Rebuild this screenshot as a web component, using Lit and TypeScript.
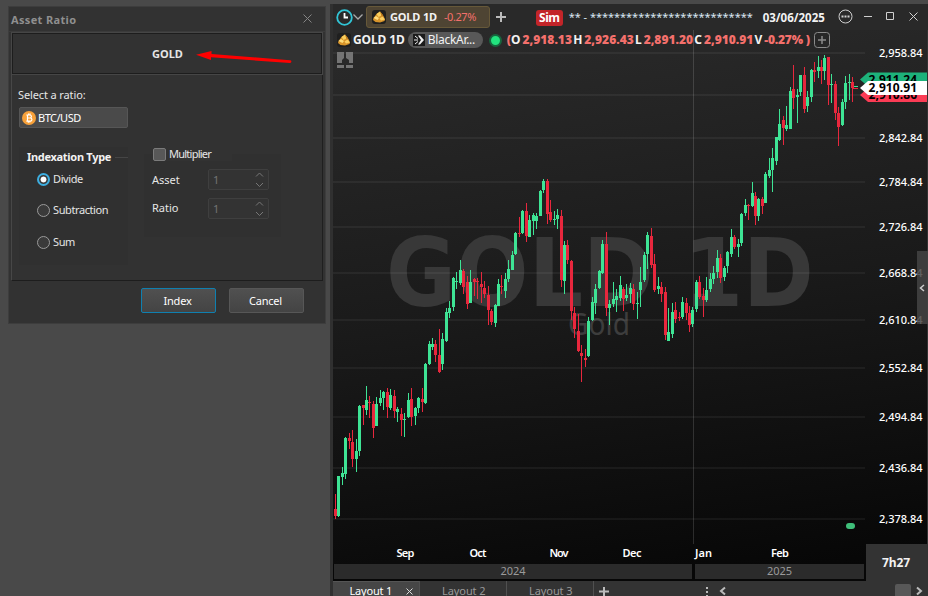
import { LitElement, html, svg, css } from "lit";
import { customElement, property } from "lit/decorators.js";
import { classMap } from "lit/directives/class-map.js";

type Candle = [x: number, high: number, top: number, bottom: number, low: number, up: 0 | 1];

const CANDLES: Candle[] = [
  [335,494,509,516,519,0],[338,476,476,516,517,1],[342,467,473,477,485,1],[345,437,438,474,479,1],
  [349,433,438,441,449,0],[352,430,442,459,467,0],[356,439,451,459,472,1],[359,405,406,451,456,1],
  [363,405,405,408,425,0],[366,386,400,410,415,1],[369,396,402,403,418,0],[373,401,404,428,438,0],
  [376,397,404,426,426,1],[380,390,398,403,406,1],[383,391,392,398,410,1],[387,388,392,407,418,0],
  [390,389,395,408,410,1],[394,390,396,411,418,0],[397,407,409,412,422,1],[401,408,414,420,436,0],
  [404,413,419,420,437,1],[408,393,400,417,418,1],[411,388,399,417,426,0],[415,407,408,416,425,1],
  [418,397,398,408,413,1],[422,388,399,402,412,0],[425,363,364,403,404,1],[429,341,344,364,365,1],
  [432,338,344,347,350,1],[435,340,344,355,362,0],[439,329,355,372,373,0],[442,333,339,364,370,1],
  [446,308,312,341,342,1],[449,301,308,313,318,1],[453,277,278,307,311,1],[456,272,281,282,289,1],
  [460,260,270,283,285,1],[463,269,271,287,294,0],[467,276,282,304,309,0],[470,270,282,303,303,1],
  [474,278,279,282,296,0],[477,278,281,282,299,0],[481,272,284,287,303,0],[484,281,288,294,298,0],
  [488,286,295,310,325,0],[491,309,311,322,325,0],[495,304,305,323,327,1],[498,279,284,306,306,1],
  [501,275,286,287,294,0],[505,273,279,291,298,1],[508,260,269,279,282,1],[512,251,255,270,270,1],
  [515,232,233,254,255,1],[519,217,233,234,237,0],[522,210,211,233,234,1],[526,203,211,236,242,0],
  [529,215,220,237,237,1],[533,213,215,221,235,1],[536,213,216,221,229,1],[540,190,191,216,216,1],
  [543,179,181,190,193,1],[547,179,181,214,224,0],[550,200,212,220,222,0],[554,211,219,220,225,1],
  [557,209,215,219,229,1],[561,210,216,280,287,0],[564,241,245,281,294,1],[567,240,245,260,264,0],
  [571,260,261,311,320,0],[574,307,313,329,338,0],[578,314,331,351,352,0],[581,345,353,356,382,0],
  [585,349,358,360,367,0],[588,317,321,356,357,1],[592,297,302,320,321,1],[595,284,289,303,314,1],
  [599,270,271,288,289,1],[602,240,244,273,274,1],[606,232,244,308,316,0],[609,300,304,308,325,1],
  [613,282,299,304,307,1],[616,289,296,300,312,1],[620,276,285,298,301,1],[623,287,289,299,311,0],
  [626,284,295,298,301,1],[630,283,288,294,303,1],[633,284,289,304,310,0],[637,292,303,304,319,1],
  [640,267,282,290,307,1],[644,252,255,280,282,1],[647,232,235,254,269,1],[651,228,236,265,268,0],
  [654,254,264,290,292,0],[658,277,286,289,294,1],[661,282,287,294,302,0],[665,287,292,335,340,0],
  [668,308,332,341,341,1],[672,303,312,334,338,1],[675,302,310,319,323,0],[679,312,317,318,321,0],
  [682,297,302,317,319,1],[686,298,303,313,320,0],[689,306,313,325,332,0],[692,307,310,324,327,1],
  [696,280,282,309,312,1],[699,276,282,297,299,0],[703,288,296,300,317,0],[706,277,290,300,302,1],
  [710,273,279,289,292,1],[713,266,273,279,284,1],[717,250,258,272,278,1],[720,254,258,278,283,0],
  [724,266,268,277,281,1],[727,251,252,266,273,1],[731,229,237,254,257,1],[734,235,237,247,249,0],
  [738,239,244,247,257,1],[741,213,214,243,246,1],[745,199,205,213,216,1],[748,204,205,206,220,0],
  [752,182,193,206,207,1],[755,192,196,216,225,0],[758,198,199,216,221,1],[762,197,199,206,214,0],
  [765,172,174,203,203,1],[769,158,170,176,178,1],[772,148,158,170,192,1],[776,137,137,161,165,1],
  [779,109,124,140,141,1],[783,116,120,128,145,0],[786,106,125,129,131,1],[790,87,91,129,129,1],
  [793,65,89,98,109,0],[797,89,95,97,123,1],[800,75,75,92,96,1],[804,67,75,109,113,0],
  [807,91,97,106,112,1],[811,69,70,97,102,1],[814,62,70,72,82,0],[818,56,67,71,78,1],
  [821,60,67,71,84,0],[824,55,58,71,80,1],[828,57,57,85,105,0],[831,74,84,85,103,1],
  [835,81,84,113,120,0],[838,107,113,127,146,0],[842,99,102,125,126,1],[845,76,83,102,109,1],
  [849,74,82,83,100,1],[852,77,82,88,102,0],
];

const PRICES: [string, number][] = [
  ["2,958.84", 53], ["", 95], ["2,842.84", 138], ["2,784.84", 182], ["2,726.84", 227],
  ["2,668.84", 273], ["2,610.84", 320], ["2,552.84", 368], ["2,494.84", 417],
  ["2,436.84", 468], ["2,378.84", 519],
];

const MONTHS: [string, number, number][] = [
  ["Sep", 405.5, 18], ["Oct", 478, 17], ["Nov", 559, 19], ["Dec", 632, 19], ["Jan", 703.5, 17], ["Feb", 780, 18],
];

const goldIcon = html`<svg width="14" height="14" viewBox="0 0 14 14">
  <rect width="14" height="14" rx="3" fill="#1f1f1f"/>
  <path d="M4.500 4 8 1.500 11.500 6 13 9.500 12.500 11 8 12.500 3.500 12 1 10 1.500 8z" fill="#d8942a"/>
  <path d="M4.500 4 8 1.500 9.500 5.500 6.500 7z" fill="#f8cd5c"/>
  <path d="M8 1.500 11 5 10.500 7 9.500 5.500z" fill="#b9771c"/>
  <path d="M1.500 8 4 6 7 8 5.500 10z" fill="#ffdc7a"/>
  <path d="M7.500 8.500 10.500 6.500 13 9.500 9 10.500z" fill="#fbcf62"/>
</svg>`;

@customElement("ratio-dialog")
class RatioDialog extends LitElement {
  static styles = css`
    :host { display: flex; flex-direction: column; box-sizing: border-box; width: 318px; height: 318px;
      background: #323232; border: 1px solid #3d3d3d; color: #e6e6e6; font: 11px/14px "Noto Sans", "Open Sans", sans-serif; }
    .title { display: flex; align-items: center; justify-content: space-between; height: 25px; padding: 0 13px 0 2px;
      color: #8f8f8f; font-weight: 700; box-sizing: border-box; border-bottom: 1px solid #3b3b3b; padding-top: 2px; letter-spacing: .35px; }
    .title svg { margin-top: -3px; }
    .panel { margin: 0 2px; height: 249px; box-sizing: border-box; border-left: 1px solid #474747; border-right: 1px solid #1f1f1f;
      border-bottom: 1px solid #1d1d1d; }
    .asset { display: flex; align-items: center; height: 41px; box-sizing: border-box; border: 1px solid #1d1d1d;
      outline: 1px solid #464646; outline-offset: 0; margin-top: 1px; padding-left: 139px; font-weight: 700; gap: 14px; }
    .asset svg { margin: 7px 0 0 -1px; }
    .label { margin: 14px 0 0 6px; letter-spacing: -.12px; }
    .combo { display: flex; align-items: center; gap: 2px; box-sizing: border-box; width: 109px; height: 21px; margin: 5px 0 0 7px;
      padding-left: 2px; background: #4a4a4a; border: 1px solid #565656; border-radius: 2px; color: #fff; letter-spacing: -.5px; }
    .groups { display: flex; align-items: flex-start; margin: 19px 0 0 7px; gap: 16px; }
    .types { width: 109px; height: 118px; background: #303030; box-sizing: border-box; padding: 3px 0 0 8px; }
    .legend { display: flex; align-items: center; gap: 4px; font-weight: 700; color: #f2f2f2; letter-spacing: -.3px; white-space: nowrap; }
    .legend i { flex: 1; height: 1px; background: #454545; }
    .radio { display: flex; align-items: center; gap: 3px; margin-left: 10px; height: 14px; letter-spacing: -.4px; }
    .radio + .radio { margin-top: 17px; }
    .radio + .radio + .radio { margin-top: 18px; }
    .legend + .radio { margin-top: 8px; }
    .dot { width: 13px; height: 13px; box-sizing: border-box; border: 1px solid #9a9a9a; border-radius: 50%; background: #3a3a3a; }
    .dot.on { border: 2px solid #3daee0; background: radial-gradient(circle, #fff 0 2.6px, #3a3a3a 3.3px); }
    .mult { width: 137px; height: 83px; margin-top: 7px; background: #303030; }
    .check { display: flex; align-items: center; gap: 3px; height: 14px; margin: -7px 0 0 9px; width: 79px; background: #323232; letter-spacing: -.75px; }
    .box { width: 13px; height: 13px; box-sizing: border-box; border: 1px solid #7b7b7b; border-radius: 2px; background: #585858; }
    .row { display: flex; align-items: center; height: 21px; margin: 8px 0 0 8px; }
    .row + .row { margin-top: 8px; }
    .row span { width: 56px; }
    .row + .row span { margin-top: -2px; }
    .spin { display: flex; align-items: center; justify-content: space-between; box-sizing: border-box; width: 61px; height: 21px;
      padding: 0 4px; border: 1px solid #3f3f3f; border-radius: 2px; color: #737373; background: #333; }
    .actions { display: flex; gap: 13px; margin: 7px 0 0 132px; }
    .btn { display: grid; place-items: center; box-sizing: border-box; width: 75px; height: 25px; border: 1px solid #575757; border-radius: 2px; padding-right: 2px;
      background: linear-gradient(#505050, #444); color: #fff; letter-spacing: -.2px; }
    .btn.primary { border-color: #0f80b0; }
  `;
  private spin(label: string) {
    return html`<div class="row"><span>${label}</span><div class="spin">1
      <svg width="9" height="17" viewBox="0 0 9 17" fill="none" stroke="#777"><path d="M1 5.500 4.500 2 8 5.500M1 12 4.500 15.500 8 12"/></svg></div></div>`;
  }
  render() {
    return html`
      <div class="title">Asset Ratio
        <svg width="9" height="9" viewBox="0 0 9 9" stroke="#858585"><path d="M.5.5l8 8M8.500.5l-8 8"/></svg></div>
      <div class="panel">
        <div class="asset">GOLD
          <svg width="96" height="12" viewBox="0 0 96 12"><path d="M0 3.800 15.500 0v3L94 9.200a1.400 1.400 0 0 1 0 2.800L15 6.300V9z" fill="#f00"/></svg></div>
        <div class="label">Select a ratio:</div>
        <div class="combo">
          <svg width="14" height="14" viewBox="0 0 14 14"><circle cx="7" cy="7" r="7" fill="#f7a13a"/>
            <path d="M5.500 3.500v7M4.300 4h3.600a1.400 1.400 0 0 1 0 3H5.500h2.800a1.600 1.600 0 0 1 0 3.200H4.300M6.600 2.500v1.500M8.100 2.600V4M6.300 10v1.700M7.800 10v1.600" fill="none" stroke="#fff" stroke-width="1.200"/></svg>
          BTC/USD</div>
        <div class="groups">
          <div class="types">
            <div class="legend">Indexation Type<i></i></div>
            ${["Divide", "Subtraction", "Sum"].map((t, i) => html`<div class="radio"><div class=${classMap({ dot: true, on: i === 0 })}></div>${t}</div>`)}
          </div>
          <div class="mult">
            <div class="check"><div class="box"></div>Multiplier</div>
            ${this.spin("Asset")}${this.spin("Ratio")}
          </div>
        </div>
      </div>
      <div class="actions"><div class="btn primary">Index</div><div class="btn">Cancel</div></div>`;
  }
}

@customElement("price-plot")
class PricePlot extends LitElement {
  @property({ attribute: false }) candles: Candle[] = [];
  static styles = css`
    :host { display: block; }
    svg { display: block; }
    text { font-family: "Noto Sans", "Open Sans", sans-serif; font-size: 11px; fill: #fff; }
    .mark { font-family: "DejaVu Sans", sans-serif; fill: #383838; font-weight: 700; font-size: 95px; }
    .submark { font-family: "Noto Sans", sans-serif; fill: #3d3d3d; font-size: 30px; }
    .tag { font-size: 12px; font-weight: 700; fill: #000; }
    .month { font-weight: 600; }
    .price { font-weight: 500; }
    .grid { fill: #fff; fill-opacity: .05; }
    .up { fill: #3ee495; }
    .down { fill: #e8273d; }
  `;
  private tag(price: string, y: number, fill: string) {
    return svg`<path d="M860 ${y} 868 ${y - 7}H927V${y + 7}H868Z" fill=${fill}/><text class="tag" x="868.500" y=${y + 4.2} textLength="48.500">${price}</text>`;
  }
  render() {
    return html`<svg width="595" height="534" viewBox="333 30 595 534" shape-rendering="crispEdges">
      <text class="mark" x="386" y="306" textLength="428" lengthAdjust="spacingAndGlyphs">GOLD 1D</text>
      <text class="submark" x="568" y="334.500" textLength="62" lengthAdjust="spacingAndGlyphs">Gold</text>
      ${PRICES.map(([, y]) => svg`<rect class="grid" x="333" y=${y - 1} width="532" height="2"/>`)}
      <rect x="693" y="30" width="1" height="514" fill="#fff" fill-opacity=".14"/>
      ${this.candles.map(([x, h, t, b, l, up]) => svg`<g class=${up ? "up" : "down"}>
        <rect x=${x} y=${h} width="1" height=${l - h}/><rect x=${x - 1} y=${t} width="3" height=${Math.max(1, b - t)}/></g>`)}
      <rect class="up" x="854" y="86" width="4" height="1"/><rect class="down" x="853" y="88" width="5" height="1"/>
      ${PRICES.map(([p, y]) => p ? svg`<text class="price" x="879" y=${y + 4} textLength="43.500">${p}</text>` : null)}
      <g shape-rendering="auto">
        ${this.tag("2,911.24", 79.5, "#1db27b")}
        ${this.tag("2,910.86", 95, "#fb3c55")}
        ${this.tag("2,910.91", 88, "#fff")}
        <rect x="846" y="523" width="9" height="6" rx="3" fill="#3fbf7a"/>
        <g fill="#747474"><path d="M337 52h7v6l-2 2v3h-5zM346 52h7v11h-4v-3l-3-2z"/><path d="M337 65h7v3h-7zM346 65h7v3h-7z"/></g>
        <path d="M927.500 30V544" stroke="#333"/>
      </g>
      ${MONTHS.map(([m, x, w]) => svg`<text class="month" x=${x - w / 2} y="557" textLength=${w}>${m}</text>`)}
      <rect x="866" y="544" width="62" height="20" fill="#333"/>
    </svg>`;
  }
}

@customElement("chart-window")
class ChartWindow extends LitElement {
  static styles = css`
    :host { display: flex; flex-direction: column; width: 595px; height: 592px; background: #272727; border-left: 3px solid #303030; box-sizing: content-box;
      font: 11px/14px "Noto Sans", "Open Sans", sans-serif; color: #f2f2f2; white-space: nowrap; }
    svg { display: block; flex: none; }
    .top { display: flex; align-items: center; height: 26px; padding-left: 3px; background: #292929; }
    .tab { display: flex; align-items: center; gap: 4px; box-sizing: border-box; width: 125px; height: 22px; margin-left: 3px; padding-left: 5px;
      border: 1px solid #665839; border-radius: 3px; background: #4e4433; font-weight: 700; }
    .tab span { letter-spacing: -.15px; }
    .tab em { font-style: normal; font-weight: 400; color: #f4706c; margin-left: 3px; letter-spacing: -.45px; }
    .sim { margin: 1px 0 0 24px; width: 27px; height: 16px; text-align: center; border-radius: 3px; background: #c32529; font: 700 12px/16px "Noto Sans", sans-serif; color: #fff; letter-spacing: -.4px; }
    .account { margin-left: 6px; width: 184px; color: #d9e6f2; letter-spacing: -.03px; }
    .date { margin: 1px 0 0 10px; width: 70px; font-weight: 700; font-size: 11.500px; }
    .body { display: grid; height: 534px; background: linear-gradient(172deg, #2b2b2b, #1a1a1a 50%, #060606); }
    .body > * { grid-area: 1 / 1; }
    .info { display: flex; align-items: center; height: 20px; padding-left: 4px; font-weight: 700; font-size: 12px; align-self: start; z-index: 1; }
    .info b { color: #f4706c; margin-left: 2px; }
    .info b.open { margin-left: 0; }
    .info b.change { letter-spacing: -.2px; }
    .name { margin-left: 2px; letter-spacing: -.1px; }
    .pill { display: flex; align-items: center; gap: 3px; box-sizing: border-box; width: 75px; height: 16px; padding-left: 5px; margin-left: 3px; border-radius: 8px;
      background: #585858; font-weight: 400; letter-spacing: -.3px; }
    .live { box-sizing: border-box; width: 13px; height: 13px; margin: 0 5px 0 6px; border: 2px solid #17663f; border-radius: 50%; background: #22e37e; }
    .handle { justify-self: end; align-self: start; display: grid; place-items: center; width: 11px; height: 73px; margin-top: 221px; background: rgba(68, 68, 68, .85); z-index: 1; }
    .foot { display: flex; height: 17px; background: #070707; }
    .year { height: 15px; background: #2b2b2b; color: #9a9a9a; text-align: center; line-height: 14px; }
    .y24 { width: 358px; margin-left: 1px; } .y25 { width: 169px; margin-left: 3px; }
    .clock { margin: -8px 0 0 auto; width: 62px; height: 25px; line-height: 14px; background: #333; text-align: center; font-weight: 700; font-size: 12px; text-indent: -2px; letter-spacing: -.1px; }
    .tabs { display: flex; height: 15px; background: #333; color: #999; overflow: hidden; line-height: 20px; }
    .layout { display: flex; align-items: flex-start; width: 87px; box-sizing: border-box; padding-left: 22px; border-right: 1px solid #505050; height: 18px; letter-spacing: -.08px; }
    .layout.on { padding-left: 16.500px; background: #464646; color: #fff; line-height: 18px; border-top: 1px solid #555; letter-spacing: -.2px; }
    .layout svg { margin: 6px 0 0 14px; }
  `;
  render() {
    return html`
      <div class="top">
        <svg width="17" height="17" viewBox="0 0 17 17" fill="none"><circle cx="8.500" cy="8.500" r="7.300" stroke="#31c5d6" stroke-width="1.800"/><path d="M8.500 4v4.500H12" stroke="#fff" stroke-width="1.800"/></svg>
        <svg width="10" height="6" viewBox="0 0 10 6" fill="none" stroke="#aaa" stroke-width="1.300"><path d="M.5.5l4.500 4.500 4.500-4.500"/></svg>
        <div class="tab">${goldIcon}<span>GOLD 1D</span><em>-0.27%</em></div>
        <svg width="22" height="10" viewBox="0 0 22 10"><path d="M6 5h10M11 0v10" stroke="#bbb" stroke-width="2"/></svg>
        <div class="sim">Sim</div>
        <div class="account">** - ***************************</div>
        <div class="date">03/06/2025</div>
        <svg width="96" height="16" viewBox="833 9 96 16" fill="none" stroke="#cfcfcf">
          <circle cx="846.500" cy="16.500" r="6.500"/><path d="M842.500 16.500h8" stroke-width="2" stroke-dasharray="2 1"/>
          <path d="M865 16.500h8M887.500 12.500h7v7h-7zM910.500 12.500l8 8M918.500 12.500l-8 8"/></svg>
      </div>
      <div class="body">
        <price-plot .candles=${CANDLES}></price-plot>
        <div class="info">${goldIcon}<span class="name">GOLD 1D</span>
          <div class="pill"><svg width="12" height="12" viewBox="0 0 12 12"><rect width="12" height="12" fill="#1b1b1b"/><path d="M2 2l3 2.500M1 6h4M2 10l3-2.500" fill="none" stroke="#eee"/><path d="M5 1.500h2L11 6 7 10.500H5L8 6z" fill="#eee"/></svg>BlackAr...</div>
          <div class="live"></div>
          <b class="open">(</b>O<b>2,918.13</b>&#8202;H<b>2,926.43</b>&#8202;L<b>2,891.20</b>&#8202;C<b>2,910.91</b>&#8202;V<b class="change">-0.27% )</b>
          <svg width="20" height="16" viewBox="0 0 20 16" fill="none" stroke="#8a8a8a"><rect x="4.500" y=".5" width="15" height="15" rx="3"/><path d="M8 8h8M12 4v8" stroke-width="1.500"/></svg>
        </div>
        <div class="handle"><svg width="8" height="8" viewBox="0 0 8 8" fill="none" stroke="#ccc" stroke-width="1.500"><path d="M5 1 1.500 4 5 7"/></svg></div>
      </div>
      <div class="foot"><div class="year y24">2024</div><div class="year y25">2025</div><div class="clock">7h27</div></div>
      <div class="tabs">
        <div class="layout on">Layout 1<svg width="7" height="7" viewBox="0 0 7 7" stroke="#ddd"><path d="M.5.5l6 6M6.500.5l-6 6"/></svg></div>
        <div class="layout">Layout 2</div><div class="layout">Layout 3</div>
        <svg width="334" height="15" viewBox="594 581 334 15" fill="none" stroke="#bbb" stroke-width="2">
          <path d="M599 591.500h10M604 587v9"/><path d="M707 587v9" stroke-dasharray="2 2"/><path d="M725 587.500 721 591l4 3.500M917 587.500l4 3.500-4 3.500"/>
          <rect x="895" y="584" width="16" height="16" rx="2" fill="#585858" stroke="none"/></svg>
      </div>`;
  }
}

@customElement("app-root")
class AppRoot extends LitElement {
  static styles = css`
    :host { display: flex; align-items: flex-start; width: 928px; height: 596px; overflow: hidden; background: #494949; }
    ratio-dialog { margin: 6px 0 0 8px; flex: none; }
    chart-window { margin: 4px 0 0 4px; flex: none; }
  `;
  render() {
    return html`<ratio-dialog></ratio-dialog><chart-window></chart-window>`;
  }
}
